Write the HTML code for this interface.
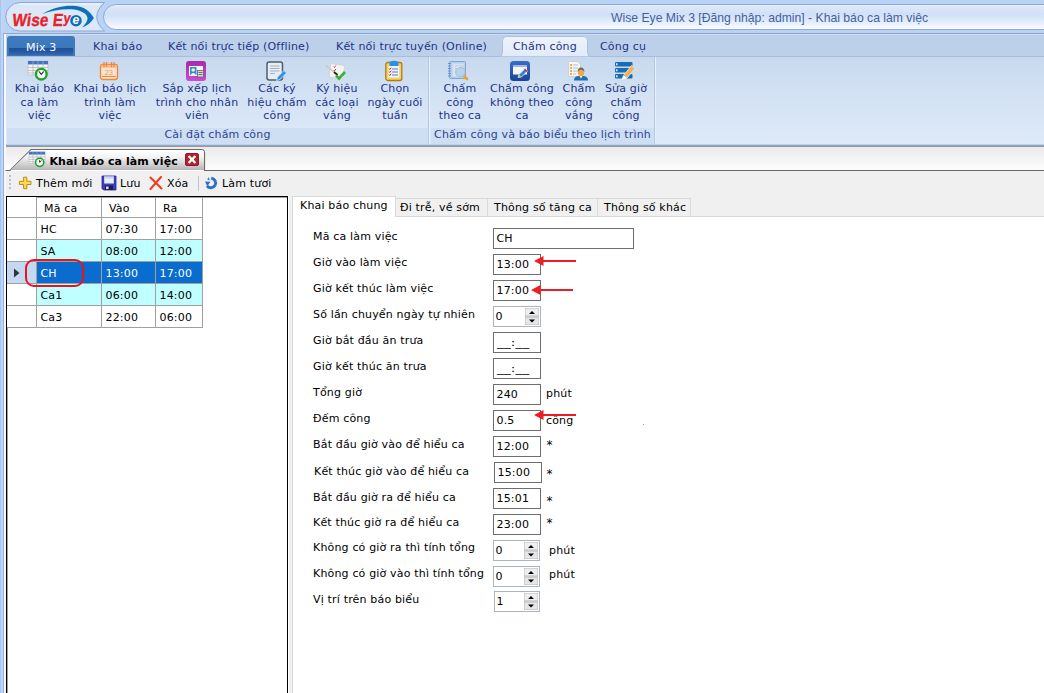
<!DOCTYPE html>
<html><head><meta charset="utf-8">
<style>
*{box-sizing:border-box;margin:0;padding:0}
html,body{width:1044px;height:693px;overflow:hidden;background:#b9d3f7}
body{position:relative;font-family:"DejaVu Sans","Liberation Sans",sans-serif;font-size:11px;letter-spacing:0.17px;color:#000}
.abs{position:absolute}
.t{position:absolute;white-space:nowrap;line-height:14px}
.rb{color:#1e3d8f}
/* title */
#logo{left:5px;top:2px;width:100px;height:29px;border:1px solid #8aa0cc;border-radius:14px 0 0 14px;background:#dbe7f7}
#tbar{left:104px;top:4px;width:960px;height:25px;border:1px solid #9db3d8;border-radius:12px;background:linear-gradient(#e6eefb,#cfdef3)}
#title{left:611px;top:11px;font-family:"Liberation Sans",sans-serif;font-size:12.2px;letter-spacing:0;color:#3f62a0}
/* ribbon */
#ribbon{left:3px;top:33px;width:1045px;height:113px;border:1px solid #8fa5c8;background:#bdd0e9;box-shadow:inset 1.5px 0 0 #f7faff, inset 0 1px 0 #cfdef2}
#rpanel{left:5px;top:56px;width:1040px;height:88px;border-top:1px solid #a9bedd;background:linear-gradient(#c8d9ee,#d2e1f3 40%,#deeaf9)}
.gcap{position:absolute;top:128px;height:16px;background:#cedef3;color:#2d4590;text-align:center;line-height:14px;white-space:nowrap}
.btxt{position:absolute;text-align:center;color:#1c3488;line-height:13.5px;top:82px;white-space:nowrap}
.tab{position:absolute;top:40px;color:#1c3488;white-space:nowrap;line-height:14px}
/* doc */
#docbg{left:4px;top:146px;width:1041px;height:25px;border-top:1px solid #999;background:linear-gradient(#ebebeb,#f4f4f4 50%,#fefefe)}
#main{left:5px;top:171px;width:1040px;height:530px;background:#f0f0f0}
.cell{position:absolute;border-right:1px solid #a0a0a0;border-bottom:1px solid #a0a0a0;height:22px;line-height:23px;padding-left:3.5px;white-space:nowrap}
.inp{position:absolute;border:1px solid #6e6e6e;background:#fff;height:21px;line-height:20.5px;padding-left:2.5px;white-space:nowrap}
.spin{position:absolute;border:1px solid #abb5c2;background:#fff;height:21px;line-height:20px;padding-left:1.5px;white-space:nowrap}
.lbl{position:absolute;left:313px;white-space:nowrap;line-height:14px}
</style></head><body>
<!-- window edge -->
<div class="abs" style="left:0;top:0;width:4px;height:693px;background:linear-gradient(90deg,#a9c4ec 0,#a9c4ec 1px,#bdd5f6 1px,#bdd5f6 100%)"></div>
<svg class="abs" style="left:0;top:0" width="1044" height="34" viewBox="0 0 1044 34">
<defs><linearGradient id="tb" x1="0" y1="0" x2="0" y2="1"><stop offset="0" stop-color="#f8fbff"/><stop offset="0.06" stop-color="#dde9fa"/><stop offset="0.4" stop-color="#d0e0f7"/><stop offset="0.7" stop-color="#e4edfb"/><stop offset="0.92" stop-color="#f5f8fe"/><stop offset="1" stop-color="#ffffff"/></linearGradient></defs>
<path d="M20 2.5 L104.5 2.5 Q89 17 104.5 31 L20 31 A14.25 14.25 0 0 1 20 2.5Z" fill="#dce8f8" stroke="#8ea6d2" stroke-width="1"/>
<path d="M20 4 L100 4" stroke="#f4f8fe" stroke-width="1" fill="none"/>
<path d="M116 4.5 L1060 4.5 L1060 29.5 L116 29.5 A12.5 12.5 0 0 1 116 4.5Z" fill="url(#tb)" stroke="#8fa9d6" stroke-width="1"/>
<path d="M42.3 14 C55 6.5 66 5.2 74 5.8 C84 6.5 90 11 93.9 17.9 C91 22.5 87 25.8 82 27.6 C85.500 24 87.800 20.500 87.500 17.900 C87 13.800 82 10.800 74 9.500 C64 8.400 52 10.500 42.300 14Z" fill="#0b72b9"/>
<circle cx="76" cy="20.7" r="5.800" fill="#0b72b9"/>
<text x="76" y="24.300" text-anchor="middle" font-family="'Liberation Sans',sans-serif" font-size="12" font-weight="bold" font-style="italic" fill="#fff">e</text>
<g transform="translate(11.800 25.900) skewX(-7) scale(0.875 1)"><text x="0" y="0" font-family="'Liberation Sans',sans-serif" font-size="17.500" font-weight="bold" fill="#e8222b" stroke="#e8222b" stroke-width="0.350">Wise E<tspan dy="-3" font-size="14.500">y</tspan></text></g>
</svg>
<div class="t" id="title">Wise Eye Mix 3 [Đăng nhập: admin] - Khai báo ca làm việc</div>
<div class="abs" id="ribbon"></div>
<div class="abs" id="rpanel"></div>

<!-- ribbon tabs -->
<div class="abs" style="left:7px;top:36px;width:68px;height:20px;border-radius:3px 3px 0 0;background:linear-gradient(#3f7bbf,#3b76ba)"></div>
<div class="abs" style="left:9px;top:47.500px;width:63.500px;height:7px;background:linear-gradient(#1e4f96,#2558a2 50%,#3169b0)"></div>
<div class="tab" style="left:26px;top:41px;color:#fff">Mix 3</div>
<div class="tab" style="left:93px">Khai báo</div>
<div class="tab" style="left:168px">Kết nối trực tiếp (Offline)</div>
<div class="tab" style="left:336px">Kết nối trực tuyến (Online)</div>
<svg class="abs" style="left:498px;top:36px" width="94" height="21" viewBox="0 0 94 21"><defs><linearGradient id="at" x1="0" y1="0" x2="0" y2="1"><stop offset="0" stop-color="#ecf3fc"/><stop offset="1" stop-color="#e1ebf8"/></linearGradient></defs>
<path d="M0.5 20.8 Q4.5 20.5 4.500 16.500 L4.500 4.500 Q4.500 0.500 8.500 0.500 L85.500 0.500 Q89.500 0.500 89.500 4.500 L89.500 16.500 Q89.500 20.500 93.500 20.800 Z" fill="url(#at)" stroke="#a8bcdc" stroke-width="0.9"/></svg>
<div class="tab" style="left:513px">Chấm công</div>
<div class="tab" style="left:600px">Công cụ</div>
<!-- groups -->
<div class="gcap" style="left:7px;width:421px">Cài đặt chấm công</div>
<div class="abs" style="left:428px;top:57px;width:1px;height:87px;background:#b4c8e4"></div>
<div class="abs" style="left:429px;top:57px;width:1px;height:87px;background:#e8f0fb"></div>
<div class="gcap" style="left:431px;width:223px">Chấm công và báo biểu theo lịch trình</div>
<div class="abs" style="left:654px;top:57px;width:1px;height:87px;background:#b4c8e4"></div>
<div class="abs" style="left:655px;top:57px;width:1px;height:87px;background:#e8f0fb"></div>
<!-- buttons -->
<div class="btxt" style="left:0.5px;width:78px">Khai báo<br>ca làm<br>việc</div>
<div class="btxt" style="left:70px;width:80px">Khai báo lịch<br>trình làm<br>việc</div>
<div class="btxt" style="left:150px;width:94px">Sắp xếp lịch<br>trình cho nhân<br>viên</div>
<div class="btxt" style="left:240px;width:74px">Các ký<br>hiệu chấm<br>công</div>
<div class="btxt" style="left:307px;width:60px">Ký hiệu<br>các loại<br>vắng</div>
<div class="btxt" style="left:360px;width:70px">Chọn<br>ngày cuối<br>tuần</div>
<div class="btxt" style="left:430px;width:60px">Chấm<br>công<br>theo ca</div>
<div class="btxt" style="left:482px;width:80px">Chấm công<br>không theo<br>ca</div>
<div class="btxt" style="left:549px;width:60px">Chấm<br>công<br>vắng</div>
<div class="btxt" style="left:596px;width:60px">Sửa giờ<br>chấm<br>công</div>
<div class="abs" id="docbg"></div>
<div class="abs" id="main"></div>
<div class="abs" style="left:3px;top:34px;width:1px;height:660px;background:#8fb0e2"></div>
<div class="abs" style="left:4px;top:34px;width:2px;height:660px;background:#f6f9ff"></div>


<!-- doc tab -->
<svg class="abs" style="left:5px;top:146px" width="1039" height="26" viewBox="0 0 1039 26">
<defs><linearGradient id="tg" x1="0" y1="0" x2="0" y2="1"><stop offset="0" stop-color="#ffffff"/><stop offset="0.35" stop-color="#f4f4f4"/><stop offset="1" stop-color="#b6b6b6"/></linearGradient></defs>
<path d="M0.5 24.5 L5 24.5 L26 3.5 L196 3.5 Q199.5 3.5 199.5 7 L199.5 24.5 L1039 24.5" fill="none" stroke="#6a6a6a" stroke-width="1.2"/>
<path d="M5.5 24 L26.3 4 L196 4 Q199 4 199 7 L199 24 Z" fill="url(#tg)"/>
</svg>
<div class="t" style="left:49.5px;top:155px;font-weight:bold;font-size:11px;letter-spacing:0.05px">Khai báo ca làm việc</div>
<div class="abs" style="left:185px;top:153px;width:14px;height:13px;background:#b3222c;border:1px solid #8e1a22;border-radius:2px"></div>
<svg class="abs" style="left:185px;top:153px" width="14" height="13"><path d="M3.600 3 L10.400 10 M10.400 3 L3.600 10" stroke="#fff" stroke-width="2.400"/></svg>
<!-- toolbar -->
<div class="t" style="left:36px;top:177px">Thêm mới</div>
<div class="t" style="left:120px;top:177px">Lưu</div>
<div class="t" style="left:167px;top:177px">Xóa</div>
<div class="abs" style="left:198px;top:176px;width:1px;height:15px;background:#c4c4c4"></div>
<div class="t" style="left:222px;top:177px">Làm tươi</div>
<!-- grid panel -->
<div class="abs" style="left:6px;top:196px;width:282px;height:500px;background:#fff;border:1px solid #000;box-shadow:1px 0 0 #fff, inset 0.5px 0.5px 0 #444"></div>
<div class="cell" style="left:7px;top:197px;width:30px;height:21px;background:#fff"></div>
<div class="cell" style="left:37px;top:197px;width:65px;height:21px;line-height:24px;padding-left:7px">Mã ca</div>
<div class="cell" style="left:102px;top:197px;width:54px;height:21px;line-height:24px;padding-left:7px">Vào</div>
<div class="cell" style="left:156px;top:197px;width:47px;height:21px;line-height:24px;padding-left:7px">Ra</div>
<div class="cell" style="left:7px;top:218px;width:30px;background:#fff"></div><div class="cell" style="left:37px;top:218px;width:65px;background:#fff;color:#000">HC</div><div class="cell" style="left:102px;top:218px;width:54px;background:#fff;color:#000">07:30</div><div class="cell" style="left:156px;top:218px;width:47px;background:#fff;color:#000">17:00</div>
<div class="cell" style="left:7px;top:240px;width:30px;background:#fff"></div><div class="cell" style="left:37px;top:240px;width:65px;background:#c0ffff;color:#000">SA</div><div class="cell" style="left:102px;top:240px;width:54px;background:#c0ffff;color:#000">08:00</div><div class="cell" style="left:156px;top:240px;width:47px;background:#c0ffff;color:#000">12:00</div>
<div class="cell" style="left:7px;top:262px;width:30px;background:#c3d9f1"></div><div class="cell" style="left:37px;top:262px;width:65px;background:#0a6cce;color:#fff">CH</div><div class="cell" style="left:102px;top:262px;width:54px;background:#0a6cce;color:#fff">13:00</div><div class="cell" style="left:156px;top:262px;width:47px;background:#0a6cce;color:#fff">17:00</div>
<div class="cell" style="left:7px;top:284px;width:30px;background:#fff"></div><div class="cell" style="left:37px;top:284px;width:65px;background:#c0ffff;color:#000">Ca1</div><div class="cell" style="left:102px;top:284px;width:54px;background:#c0ffff;color:#000">06:00</div><div class="cell" style="left:156px;top:284px;width:47px;background:#c0ffff;color:#000">14:00</div>
<div class="cell" style="left:7px;top:306px;width:30px;background:#fff"></div><div class="cell" style="left:37px;top:306px;width:65px;background:#fff;color:#000">Ca3</div><div class="cell" style="left:102px;top:306px;width:54px;background:#fff;color:#000">22:00</div><div class="cell" style="left:156px;top:306px;width:47px;background:#fff;color:#000">06:00</div>

<svg class="abs" style="left:13.200px;top:268px" width="8" height="10"><path d="M1 0.5 L6.5 5 L1 9.5Z" fill="#333"/></svg>
<div class="abs" style="left:25px;top:259px;width:59px;height:28px;border:2.300px solid #e8141c;border-radius:9px"></div>
<!-- tab control -->
<div class="abs" style="left:292px;top:216px;width:760px;height:480px;background:#fff;border:1px solid #d9d9d9"></div>
<div class="abs" style="left:292px;top:196px;width:104px;height:21px;background:#fff;border:1px solid #d9d9d9;border-bottom:none"></div>
<div class="abs" style="left:396px;top:198px;width:92px;height:18px;border:1px solid #d9d9d9;border-left:none;border-bottom:none"></div>
<div class="abs" style="left:488px;top:198px;width:110px;height:18px;border:1px solid #d9d9d9;border-left:none;border-bottom:none"></div>
<div class="abs" style="left:598px;top:198px;width:93px;height:18px;border:1px solid #d9d9d9;border-left:none;border-bottom:none"></div>
<div class="t" style="left:300px;top:199px">Khai báo chung</div>
<div class="t" style="left:400px;top:201px">Đi trễ, về sớm</div>
<div class="t" style="left:494px;top:201px">Thông số tăng ca</div>
<div class="t" style="left:604px;top:201px">Thông số khác</div>
<div class="lbl" style="top:229.5px;left:313px">Mã ca làm việc</div>
<div class="lbl" style="top:255.5px;left:313px">Giờ vào làm việc</div>
<div class="lbl" style="top:281.5px;left:313px">Giờ kết thúc làm việc</div>
<div class="lbl" style="top:307.5px;left:313px">Số lần chuyển ngày tự nhiên</div>
<div class="lbl" style="top:333.5px;left:313px">Giờ bắt đầu ăn trưa</div>
<div class="lbl" style="top:359.5px;left:313px">Giờ kết thúc ăn trưa</div>
<div class="lbl" style="top:385.5px;left:313px">Tổng giờ</div>
<div class="lbl" style="top:411.5px;left:313px">Đếm công</div>
<div class="lbl" style="top:437.5px;left:313px">Bắt đầu giờ vào để hiểu ca</div>
<div class="lbl" style="top:464.5px;left:314px">Kết thúc giờ vào để hiểu ca</div>
<div class="lbl" style="top:490.5px;left:313px">Bắt đầu giờ ra để hiểu ca</div>
<div class="lbl" style="top:515.5px;left:313px">Kết thúc giờ ra để hiểu ca</div>
<div class="lbl" style="top:540.5px;left:313px">Không có giờ ra thì tính tổng</div>
<div class="lbl" style="top:566.5px;left:313px">Không có giờ vào thì tính tổng</div>
<div class="lbl" style="top:592.5px;left:313px">Vị trí trên báo biểu</div>

<div class="inp" style="left:493px;top:228px;width:141px">CH</div>
<div class="inp" style="left:493px;top:254px;width:48px">13:00</div>
<div class="inp" style="left:493px;top:280px;width:48px">17:00</div>
<div class="spin" style="left:493px;top:306px;width:48px">0</div>
<svg class="abs" style="left:525px;top:308px" width="14" height="17"><rect x="0" y="0" width="14" height="8" fill="#eeeeee" stroke="#b9b9b9" stroke-width="1"/><rect x="0" y="9" width="14" height="8" fill="#e6e6e6" stroke="#b9b9b9" stroke-width="1"/><path d="M4 6 L7 3 L10 6Z M4 11.5 L7 14.5 L10 11.5Z" fill="#000"/></svg>
<div class="inp" style="left:493px;top:332px;width:48px"><span style="display:inline-block;transform:scaleX(1.22);transform-origin:0 50%">__:__</span></div>
<div class="inp" style="left:493px;top:358px;width:48px"><span style="display:inline-block;transform:scaleX(1.22);transform-origin:0 50%">__:__</span></div>
<div class="inp" style="left:493px;top:384px;width:48px">240</div>
<div class="inp" style="left:493px;top:410px;width:48px">0.5</div>
<div class="inp" style="left:493px;top:436px;width:48px">12:00</div>
<div class="inp" style="left:494px;top:462px;width:48px">15:00</div>
<div class="inp" style="left:493px;top:488px;width:48px">15:01</div>
<div class="inp" style="left:493px;top:514px;width:48px">23:00</div>
<div class="spin" style="left:493px;top:540px;width:47px">0</div>
<svg class="abs" style="left:524px;top:542px" width="14" height="17"><rect x="0" y="0" width="14" height="8" fill="#eeeeee" stroke="#b9b9b9" stroke-width="1"/><rect x="0" y="9" width="14" height="8" fill="#e6e6e6" stroke="#b9b9b9" stroke-width="1"/><path d="M4 6 L7 3 L10 6Z M4 11.5 L7 14.5 L10 11.5Z" fill="#000"/></svg>
<div class="spin" style="left:493px;top:566px;width:47px">0</div>
<svg class="abs" style="left:524px;top:568px" width="14" height="17"><rect x="0" y="0" width="14" height="8" fill="#eeeeee" stroke="#b9b9b9" stroke-width="1"/><rect x="0" y="9" width="14" height="8" fill="#e6e6e6" stroke="#b9b9b9" stroke-width="1"/><path d="M4 6 L7 3 L10 6Z M4 11.5 L7 14.5 L10 11.5Z" fill="#000"/></svg>
<div class="spin" style="left:494px;top:591px;width:46px">1</div>
<svg class="abs" style="left:524px;top:593px" width="14" height="17"><rect x="0" y="0" width="14" height="8" fill="#eeeeee" stroke="#b9b9b9" stroke-width="1"/><rect x="0" y="9" width="14" height="8" fill="#e6e6e6" stroke="#b9b9b9" stroke-width="1"/><path d="M4 6 L7 3 L10 6Z M4 11.5 L7 14.5 L10 11.5Z" fill="#000"/></svg>
<div class="t" style="left:546px;top:387px">phút</div>
<div class="t" style="left:546px;top:414px">công</div>
<div class="t" style="left:546.5px;top:438px;font-size:12px">*</div>
<div class="t" style="left:546.5px;top:467px;font-size:12px">*</div>
<div class="t" style="left:546.5px;top:494px;font-size:12px">*</div>
<div class="t" style="left:546.5px;top:516px;font-size:12px">*</div>
<div class="t" style="left:549px;top:544px">phút</div>
<div class="t" style="left:549px;top:568px">phút</div>
<svg class="abs" style="left:533px;top:255px" width="44" height="12"><path d="M1 6 L10.5 1 L10.5 5 L43 5 L43 7 L10.5 7 L10.5 11Z" fill="#ee1c24"/></svg>
<svg class="abs" style="left:530px;top:284px" width="44" height="12"><path d="M1 6 L10.5 1 L10.5 5 L43 5 L43 7 L10.5 7 L10.5 11Z" fill="#ee1c24"/></svg>
<svg class="abs" style="left:533px;top:409px" width="44" height="12"><path d="M1 6 L10.5 1 L10.5 5 L43 5 L43 7 L10.5 7 L10.5 11Z" fill="#ee1c24"/></svg>
<div class="abs" style="left:643px;top:424px;width:1px;height:1px;background:#f08080"></div>

<!-- icons -->
<svg class="abs" style="left:27px;top:60px" width="22" height="21" viewBox="0 0 22 21">
<rect x="1" y="1" width="20" height="14" fill="#f4f4f4" stroke="#b8b8b8" stroke-width="0.6"/>
<rect x="1" y="1" width="20" height="3.4" fill="#3f74c8"/>
<path d="M1 7.5H21M1 10.5H21M1 13H21M6 1V15M11 1V15M16 1V15" stroke="#b0b0b0" stroke-width="0.7"/>
<circle cx="14.3" cy="14.2" r="6.5" fill="#25a233"/><circle cx="14.3" cy="14.2" r="4.1" fill="#f6fbf6"/>
<path d="M12 11.5 L14.3 14.4 L16.6 11.5" stroke="#222" stroke-width="1.1" fill="none"/>
</svg>
<svg class="abs" style="left:99px;top:61px" width="20" height="20" viewBox="0 0 20 20">
<rect x="1.5" y="3.5" width="17" height="15" rx="2.5" fill="#fbe3cf" stroke="#f0883a" stroke-width="1.4"/>
<rect x="2.200" y="4.200" width="15.600" height="2.600" fill="#f6bb8e"/>
<path d="M5 1V6M7.5 1V6M12.5 1V6M15 1V6" stroke="#f0883a" stroke-width="1.2"/>
<path d="M3 15.5H17" stroke="#f0883a" stroke-width="1"/>
<text x="10" y="13.600" text-anchor="middle" font-family="'Liberation Sans',sans-serif" font-size="7" fill="#f0883a" fill-opacity="0.850">23</text>
</svg>
<svg class="abs" style="left:185px;top:60px" width="22" height="22" viewBox="0 0 22 22">
<defs><linearGradient id="pg" x1="0" y1="0" x2="0" y2="1"><stop offset="0" stop-color="#a62aa6"/><stop offset="1" stop-color="#cc4ad6"/></linearGradient></defs>
<rect x="1" y="1" width="20" height="20" rx="3" fill="url(#pg)"/>
<rect x="4" y="6" width="14" height="10" fill="#f2f2f2"/>
<rect x="5" y="7" width="6.5" height="8" fill="#2f8fe0"/>
<circle cx="8.2" cy="10" r="1.8" fill="#ffe9a8"/><path d="M5.5 15 Q8.2 11 11 15Z" fill="#fff5d8"/>
<rect x="12.5" y="10.5" width="6" height="6.5" fill="#d8d8d8" stroke="#666" stroke-width="0.8"/>
<path d="M13.5 12.5H17.5M13.5 14.5H17.5" stroke="#555" stroke-width="0.8"/>
</svg>
<svg class="abs" style="left:265px;top:60px" width="23" height="22" viewBox="0 0 23 22">
<rect x="2" y="2" width="15.5" height="18" rx="2.2" fill="#e6edf4" stroke="#4c5f6b" stroke-width="1.5"/>
<path d="M5 6H14.5M5 8.5H14.5M5 11H14.5M5 13.5H10" stroke="#aab2b8" stroke-width="1.1"/>
<path d="M11.5 20.5 L12.5 17 L19 10.5 L21.5 13 L15 19.5Z" fill="#2b93e8" stroke="#dbe8f6" stroke-width="0.8"/>
</svg>
<svg class="abs" style="left:325px;top:61px" width="22" height="20" viewBox="0 0 22 20">
<path d="M6 2.5 L19.5 4.5 L18 18 L4 16Z" fill="#f4f4f2" stroke="#d0d0cc" stroke-width="0.8"/>
<path d="M8.5 5.5l1 1 1.3-2M8.5 9l1 1 1.3-2" stroke="#d83030" stroke-width="0.9" fill="none"/>
<path d="M1 4.5 L9.5 11.5" stroke="#c8c8c8" stroke-width="1.5"/><path d="M9 11 L12.5 14" stroke="#222" stroke-width="1.8"/>
<path d="M11 14.5 L14 17.5 L20 11" stroke="#35b435" stroke-width="2.6" fill="none"/>
</svg>
<svg class="abs" style="left:384px;top:60px" width="20" height="22" viewBox="0 0 20 22">
<rect x="1.8" y="2.5" width="16" height="18" rx="2" fill="#f7d35a" stroke="#b37a12" stroke-width="1.3"/>
<rect x="4.3" y="6" width="11" height="11.5" fill="#eef4fc"/>
<path d="M5.5 2 Q10 -0.5 14.5 2 L14.5 6 L5.5 6Z" fill="#2f8fe8"/>
<path d="M8 9H14M8 12H14M8 15H14" stroke="#4a7fd6" stroke-width="1"/>
<path d="M5 8.5l.8 1 1.4-1.8M5 11.5l.8 1 1.4-1.8M5 14.5l.8 1 1.4-1.8" stroke="#e02020" stroke-width="1" fill="none"/>
</svg>
<svg class="abs" style="left:447px;top:60px" width="22" height="21" viewBox="0 0 22 21">
<rect x="2.5" y="1.5" width="16" height="17" rx="1" fill="#b4d0ec" stroke="#7fa6d2" stroke-width="1"/>
<rect x="5.5" y="3.5" width="11" height="13" fill="#d3e4f5"/>
<path d="M1 3.5H4M1 6H4M1 8.5H4M1 11H4M1 13.5H4M1 16H4" stroke="#6f93c0" stroke-width="1"/>
<rect x="9" y="6" width="6" height="3" fill="#f4f8fc" stroke="#9ab" stroke-width="0.5"/>
<path d="M16.5 15.5 L20 19" stroke="#f0a028" stroke-width="2.6" stroke-linecap="round"/>
<circle cx="13.3" cy="12" r="4.6" fill="#a9d2f3" fill-opacity="0.85" stroke="#b9bfc6" stroke-width="1.3"/>
</svg>
<svg class="abs" style="left:509px;top:60px" width="22" height="22" viewBox="0 0 22 22">
<defs><linearGradient id="bg8" x1="0" y1="0" x2="0" y2="1"><stop offset="0" stop-color="#3a6cc4"/><stop offset="1" stop-color="#1b4596"/></linearGradient></defs>
<rect x="1" y="1" width="20" height="20" rx="3.5" fill="url(#bg8)"/>
<rect x="4" y="5" width="14" height="9.5" fill="#f4f6fa"/>
<rect x="4" y="5" width="14" height="2.2" fill="#dfe8f6"/><path d="M4 6H18" stroke="#3a6cc4" stroke-width="0.8"/>
<path d="M9 17.5 L10 14.5 L16 8.5 L18.5 11 L12.5 17Z" fill="#2f7fe0" stroke="#fff" stroke-width="0.7"/>
<path d="M15 9.5 L16 8.5 L18.5 11 L17.5 12Z" fill="#e03030"/>
<path d="M9 17.5 L10 14.5 L12 16.5Z" fill="#e8c080"/>
</svg>
<svg class="abs" style="left:567px;top:60px" width="23" height="22" viewBox="0 0 23 22">
<path d="M1.5 1.5 H10.5 L13.5 4.5 V16.5 H1.5Z" fill="#f7f7f7" stroke="#c9c9c9" stroke-width="0.8"/>
<path d="M3 5h2M3 8h2M3 11h2M3 14h2" stroke="#f09030" stroke-width="1.6"/>
<path d="M6 5H11M6 8H11M6 11H10M6 14H9" stroke="#b8b8b8" stroke-width="0.9"/>
<path d="M7 20.5 Q7 16.5 11 16 L17 16 Q21 16.500 21 20.500Z" fill="#1c6fb8"/>
<path d="M12.5 16 L14 18.500 L15.500 16Z" fill="#fff"/>
<ellipse cx="14" cy="12.500" rx="3.200" ry="3.800" fill="#f6a838"/>
<path d="M10.600 12 Q10.500 7.500 14 7.500 Q17.500 7.500 17.400 12 Q16 9.800 14 9.800 Q12 9.800 10.600 12Z" fill="#6a6e74"/>
</svg>
<svg class="abs" style="left:614px;top:61px" width="22" height="20" viewBox="0 0 22 20">
<rect x="1" y="1" width="17.500" height="4.600" rx="1" fill="#1a6db4"/>
<rect x="1" y="7" width="17.500" height="4.600" rx="1" fill="#1a6db4"/>
<rect x="1" y="13" width="17.500" height="4.600" rx="1" fill="#1a6db4"/>
<path d="M2.800 2.300v2M2.800 8.300v2M2.800 14.300v2" stroke="#fff" stroke-width="1.300"/>
<path d="M8 18.500 L9.500 14.500 L17.500 4.500 L21 7.500 L13 17Z" fill="#f3b255" stroke="#dfe9f7" stroke-width="0.800"/>
<path d="M8 18.500 L9.500 14.500 L13 17Z" fill="#fff"/>
</svg>
<!-- doc tab icon -->
<svg class="abs" style="left:28px;top:151px" width="18" height="17" viewBox="0 0 22 21">
<rect x="1" y="1" width="20" height="14" fill="#f4f4f4" stroke="#b8b8b8" stroke-width="0.600"/>
<rect x="1" y="1" width="20" height="3.400" fill="#3f74c8"/>
<path d="M1 7.500H21M1 10.500H21M1 13H21M6 1V15M11 1V15M16 1V15" stroke="#b0b0b0" stroke-width="0.700"/>
<circle cx="14.300" cy="14" r="6" fill="#1f9a2c"/><circle cx="14.300" cy="14" r="4.100" fill="#f6fbf6"/>
<path d="M14.300 14 L14.300 11 M14.300 14 L16.600 12" stroke="#222" stroke-width="1.100" fill="none"/>
</svg>
<!-- toolbar icons -->
<svg class="abs" style="left:9px;top:173px" width="4" height="18"><path d="M1 2v2M1 6v2M1 10v2M1 14v2" stroke="#b4b4b4" stroke-width="1.600"/></svg>
<svg class="abs" style="left:18px;top:176px" width="15" height="15" viewBox="0 0 15 15"><path d="M5.600 1.200H8.800V5.300H13V8.500H8.800V12.700H5.600V8.500H1.400V5.300H5.600Z" fill="#ffdc55" stroke="#c28a14" stroke-width="1"/></svg>
<svg class="abs" style="left:101px;top:175px" width="16" height="16" viewBox="0 0 16 16">
<path d="M1 1H15V15H2.500L1 13.500Z" fill="#3d3dc0" stroke="#2a2a8c" stroke-width="0.800"/>
<rect x="3.200" y="1.500" width="9.600" height="7" fill="#e9eefb"/><rect x="3.200" y="1.500" width="9.600" height="2" fill="#c5d2f2"/>
<rect x="4" y="10.500" width="8" height="4.500" fill="#1c1c50"/><rect x="5" y="11.500" width="2.600" height="2.600" fill="#d8d8e8"/>
</svg>
<svg class="abs" style="left:149px;top:176px" width="14" height="14" viewBox="0 0 14 14"><path d="M1.500 1.500 L12.500 12.500 M12 1 L1.500 13" stroke="#f03c1e" stroke-width="2" stroke-linecap="round"/></svg>
<svg class="abs" style="left:204px;top:176px" width="15" height="14" viewBox="0 0 15 14">
<path d="M7.200 2.200 A4.800 4.800 0 1 1 3 9.800" fill="none" stroke="#2f6fc8" stroke-width="2.900"/>
<path d="M1 5.500 L6.500 5.800 L3.200 10.200Z" fill="#2f6fc8"/>
<path d="M3.200 3.200 L5 1.200 L5.600 4.600Z" fill="#2f6fc8"/>
</svg>
</body></html>
